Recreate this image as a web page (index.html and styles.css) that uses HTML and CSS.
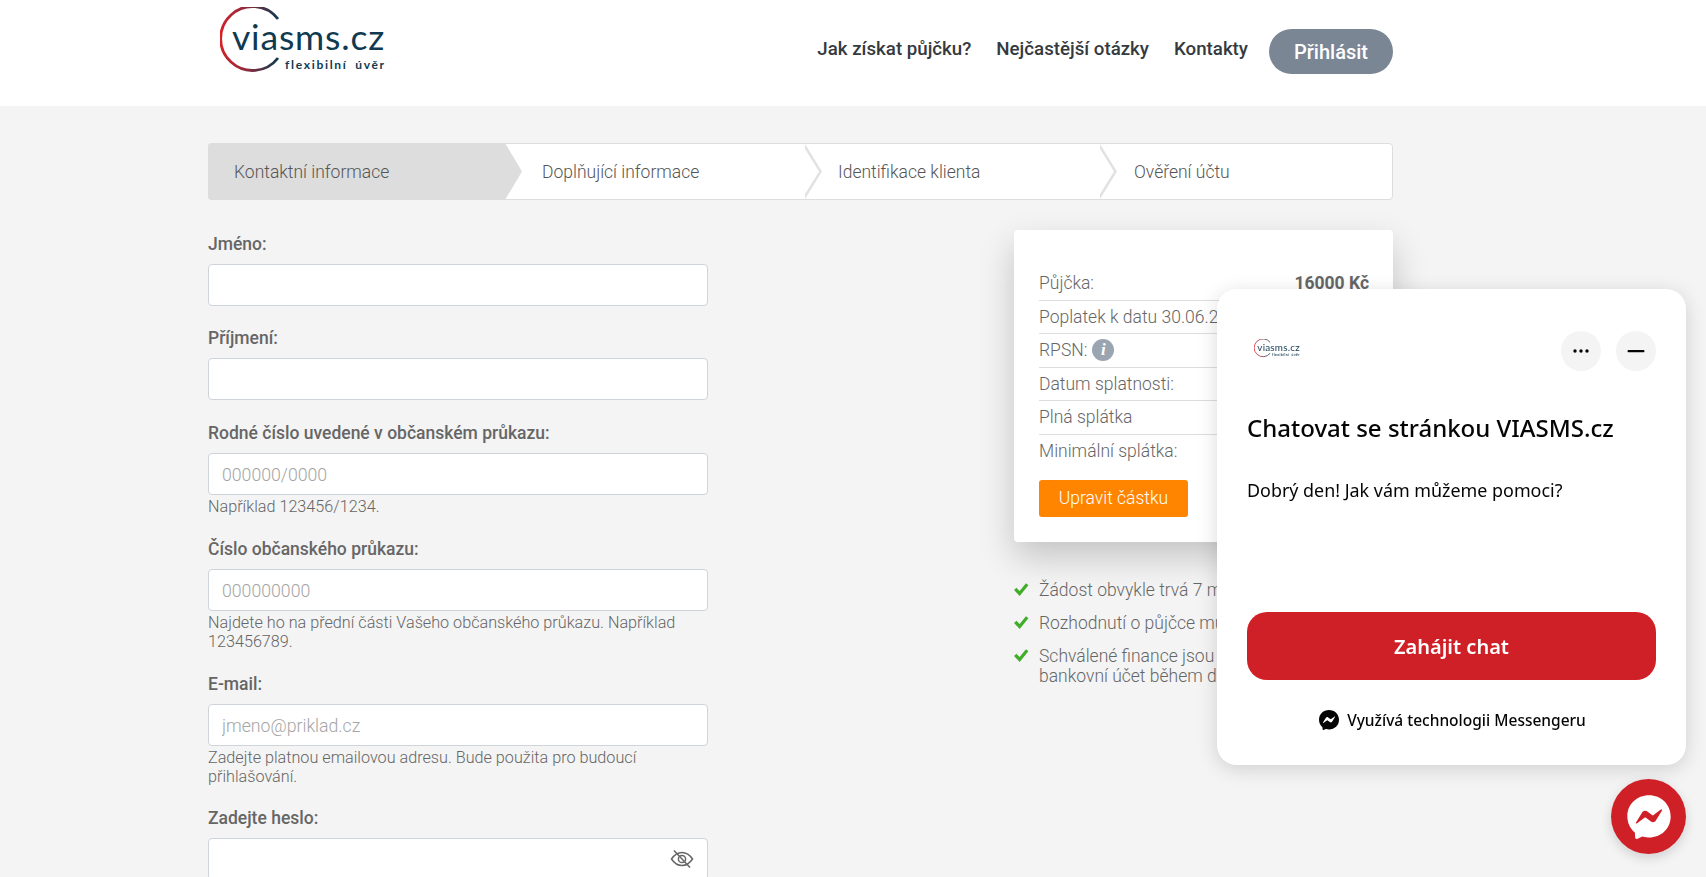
FILE: index.html
```html
<!DOCTYPE html>
<html lang="cs">
<head>
    <meta charset="utf-8" />
    <title>viasms.cz - Kontaktní informace</title>
    <link rel="stylesheet" href="styles.css">
</head>
<body>
    <svg class="defs" width="0" height="0">
        <defs>
            <linearGradient id="ring" x1="0" y1="0" x2="1" y2="0">
                <stop offset="0" stop-color="#d3222a" />
                <stop offset="0.45" stop-color="#8f2a3c" />
                <stop offset="1" stop-color="#0f3a50" />
            </linearGradient>
        </defs>
    </svg>

    <header class="top">
        <div class="top-in">
            <a href="#" class="logo">
                <svg viewBox="0 0 176 68" width="176" height="68">
                    <path d="M58 12A32 32 0 1 0 58 51" fill="none" stroke="url(#ring)" stroke-width="2.800" />
                    <text x="12" y="43" class="logo-main">viasms.cz</text>
                    <text x="65" y="62" class="logo-sub">flexibilní úvěr</text>
                </svg>
            </a>
            <nav class="nav">
                <a href="#">Jak získat půjčku?</a>
                <a href="#">Nejčastější otázky</a>
                <a href="#">Kontakty</a>
                <a href="#" class="login">Přihlásit</a>
            </nav>
        </div>
    </header>

    <main class="wrap">
        <ol class="steps">
            <li class="step active">Kontaktní informace</li>
            <li class="step s2">Doplňující informace</li>
            <li class="step s3">Identifikace klienta</li>
            <li class="step s4">Ověření účtu</li>
        </ol>

        <div class="cols">
            <form class="form">
                <div class="field">
                    <label>Jméno:</label>
                    <input type="text">
                </div>
                <div class="field">
                    <label>Příjmení:</label>
                    <input type="text">
                </div>
                <div class="field">
                    <label>Rodné číslo uvedené v občanském průkazu:</label>
                    <input type="text" placeholder="000000/0000">
                    <p class="hint">Například 123456/1234.</p>
                </div>
                <div class="field">
                    <label>Číslo občanského průkazu:</label>
                    <input type="text" placeholder="000000000">
                    <p class="hint">Najdete ho na přední části Vašeho občanského průkazu. Například 123456789.</p>
                </div>
                <div class="field email">
                    <label>E-mail:</label>
                    <input type="text" placeholder="jmeno@priklad.cz">
                    <p class="hint">Zadejte platnou emailovou adresu. Bude použita pro budoucí přihlašování.</p>
                </div>
                <div class="field">
                    <label>Zadejte heslo:</label>
                    <div class="pass">
                        <input type="password">
                        <svg class="eye" viewBox="0 0 24 24" width="24" height="24" fill="none" stroke="#666" stroke-width="1.500">
                            <path d="M1.500 12C4.500 7.500 8 5.500 12 5.500s7.500 2 10.500 6.500C19.500 16.500 16 18.500 12 18.500S4.500 16.500 1.500 12z" />
                            <circle cx="12" cy="12" r="3.600" />
                            <path d="M4 3.500l16 17" />
                        </svg>
                    </div>
                </div>
            </form>

            <aside class="side">
                <div class="card">
                    <div class="row"><span>Půjčka:</span><b>16000 Kč</b></div>
                    <div class="row"><span>Poplatek k datu 30.06.2</span></div>
                    <div class="row"><span>RPSN:</span><i class="info">i</i></div>
                    <div class="row"><span>Datum splatnosti:</span></div>
                    <div class="row"><span>Plná splátka</span></div>
                    <div class="row last"><span>Minimální splátka:</span></div>
                    <a href="#" class="edit">Upravit částku</a>
                </div>
                <ul class="checks">
                    <li><svg viewBox="0 0 16 16" width="17" height="17"><path d="M1 8.500l2.200-2.200 3 3 6-7.300 2.300 2-8.200 10.200z" fill="#42ad2b" /></svg>Žádost obvykle trvá 7 m</li>
                    <li><svg viewBox="0 0 16 16" width="17" height="17"><path d="M1 8.500l2.200-2.200 3 3 6-7.300 2.300 2-8.200 10.200z" fill="#42ad2b" /></svg>Rozhodnutí o půjčce mu</li>
                    <li><svg viewBox="0 0 16 16" width="17" height="17"><path d="M1 8.500l2.200-2.200 3 3 6-7.300 2.300 2-8.200 10.200z" fill="#42ad2b" /></svg>Schválené finance jsou<br>bankovní účet během d</li>
                </ul>
            </aside>
        </div>
    </main>

    <section class="chat">
        <div class="chat-head">
            <svg class="chat-logo" viewBox="0 0 176 68" width="49" height="19">
                <path d="M58 12A32 32 0 1 0 58 51" fill="none" stroke="url(#ring)" stroke-width="2.800" />
                <text x="12" y="43" class="logo-main">viasms.cz</text>
                <text x="65" y="62" class="logo-sub">flexibilní úvěr</text>
            </svg>
            <div class="chat-btns">
                <span class="round">
                    <svg viewBox="0 0 20 20" width="20" height="20" fill="#050505"><circle cx="4" cy="10" r="1.700" /><circle cx="10" cy="10" r="1.700" /><circle cx="16" cy="10" r="1.700" /></svg>
                </span>
                <span class="round">
                    <svg viewBox="0 0 20 20" width="20" height="20"><rect x="1.500" y="9" width="17" height="2.200" rx="1" fill="#050505" /></svg>
                </span>
            </div>
        </div>
        <h2 class="chat-title">Chatovat se stránkou VIASMS.cz</h2>
        <p class="chat-text">Dobrý den! Jak vám můžeme pomoci?</p>
        <a href="#" class="chat-start">Zahájit chat</a>
        <div class="chat-foot">
            <svg viewBox="0 0 24 24" width="24" height="24">
                <path d="M12 2C6.400 2 2 6.100 2 11.700c0 2.900 1.200 5.500 3.200 7.200.2.100.3.400.3.600l.1 1.800c0 .6.600 1 1.100.7l2-.9c.2-.1.400-.1.600 0 .9.200 1.800.4 2.700.4 5.600 0 10-4.100 10-9.700S17.600 2 12 2z" fill="#050505" />
                <path d="M6 14.500l2.900-4.700c.5-.7 1.500-.9 2.200-.4l2.300 1.700c.2.200.5.200.7 0l3.200-2.400c.4-.3 1-.2.700.3l-2.900 4.700c-.5.700-1.500.9-2.200.4l-2.300-1.700c-.2-.2-.5-.2-.7 0l-3.200 2.400c-.4.300-1 .2-.7-.3z" fill="#fff" />
            </svg>
            Využívá technologii Messengeru
        </div>
    </section>

    <a href="#" class="fab">
        <svg viewBox="0 0 24 24" width="52" height="52">
            <path d="M12 2C6.400 2 2 6.100 2 11.700c0 2.900 1.200 5.500 3.200 7.200.2.100.3.400.3.600l.1 1.800c0 .6.600 1 1.100.7l2-.9c.2-.1.400-.1.600 0 .9.200 1.800.4 2.700.4 5.600 0 10-4.100 10-9.700S17.600 2 12 2z" fill="#fff" />
            <path d="M6 14.500l2.900-4.700c.5-.7 1.500-.9 2.200-.4l2.300 1.700c.2.200.5.200.7 0l3.200-2.400c.4-.3 1-.2.700.3l-2.900 4.700c-.5.700-1.500.9-2.200.4l-2.300-1.700c-.2-.2-.5-.2-.7 0l-3.200 2.400c-.4.300-1 .2-.7-.3z" fill="#d02027" />
        </svg>
    </a>
</body>
</html>
```

FILE: styles.css
```css
html, body {
    height: 100%;
    overflow: hidden;
}

body {
    margin: 0;
    background-color: #f4f4f4;
    color: #666;
    font-family: Roboto, "Liberation Sans", sans-serif;
    font-size: 17.500px;
    font-weight: 300;
}

a {
    text-decoration: none;
}

.defs {
    display: block;
    height: 0;
}

/* header */
.top {
    height: 106px;
    background-color: #fff;
}

.top-in {
    width: 1185px;
    margin-left: 208px;
    height: 100%;
    display: flex;
    justify-content: space-between;
}

.logo {
    margin: 7px 0 0 12px;
}

.logo-main {
    font-family: Lato, "Open Sans", sans-serif;
    font-size: 35.500px;
    font-weight: 400;
    letter-spacing: 0.8px;
    fill: #0f3a50;
}

.logo-sub {
    font-family: Lato, "Open Sans", sans-serif;
    font-size: 12px;
    font-weight: 700;
    letter-spacing: 1.700px;
    word-spacing: 3px;
    fill: #0f3a50;
}

.nav {
    display: flex;
    align-items: center;
    gap: 25px;
    height: 98px;
}

.nav a {
    color: #343a40;
    font-size: 18.700px;
    font-weight: 500;
}

.nav .login {
    margin-left: -4px;
    width: 124px;
    height: 45px;
    line-height: 47px;
    margin-top: 5px;
    text-align: center;
    border-radius: 23px;
    background-color: #7a8694;
    color: #fff;
    font-size: 20px;
}

/* steps */
.wrap {
    width: 1185px;
    margin-left: 208px;
}

.steps {
    list-style: none;
    margin: 37px 0 0;
    padding: 0;
    display: flex;
    height: 57px;
    box-sizing: border-box;
    border: 1px solid #ddd;
    border-radius: 4px;
    background-color: #fff;
}

.step {
    position: relative;
    box-sizing: border-box;
    line-height: 56px;
    color: #555;
}

.step::before,
.step::after {
    content: "";
    position: absolute;
    top: 0;
    bottom: 0;
    width: 17px;
    clip-path: polygon(0 0, 100% 50%, 0 100%);
    z-index: 1;
}

.step::before {
    right: -17px;
    background-color: #e2e2e2;
}

.step::after {
    right: -14px;
    background-color: #fff;
}

.step.active {
    width: 297px;
    padding-left: 26px;
    margin: -1px 0 -1px -1px;
    line-height: 58px;
    background-color: #ddd;
    border-radius: 4px 0 0 4px;
}

.step.active::before {
    background-color: #ddd;
}

.step.active::after {
    display: none;
}

.s2 {
    width: 300px;
    padding-left: 37px;
}

.s3 {
    width: 295px;
    padding-left: 33px;
}

.s4 {
    flex: 1;
    padding-left: 34px;
}

.s4::before,
.s4::after {
    display: none;
}

/* form */
.cols {
    display: flex;
    justify-content: space-between;
    align-items: flex-start;
    margin-top: 30px;
}

.form {
    width: 500px;
    padding-top: 4px;
}

.field {
    margin-bottom: 23px;
}

.field:first-child,
.field.email {
    margin-bottom: 22px;
}

.field label {
    display: block;
    height: 20px;
    line-height: 20px;
    margin-bottom: 10px;
    font-weight: 500;
}

.field input {
    display: block;
    width: 100%;
    height: 42px;
    box-sizing: border-box;
    padding: 2px 13px 0;
    border: 1px solid #ced4da;
    border-radius: 4px;
    background-color: #fff;
    font-family: Roboto, sans-serif;
    font-size: 17.700px;
    font-weight: 300;
    color: #555;
}

.field input::placeholder {
    color: #a5a5a5;
}

.hint {
    margin: 2px 0 0;
    font-size: 16.200px;
    line-height: 19px;
}

.pass {
    position: relative;
}

.eye {
    position: absolute;
    right: 14px;
    top: 9px;
}

/* side */
.side {
    width: 379px;
}

.card {
    box-sizing: border-box;
    height: 312px;
    padding: 37px 24px 0 25px;
    background-color: #fff;
    border-radius: 4px;
    box-shadow: 0 15px 35px rgba(0, 0, 0, 0.2);
}

.row {
    display: flex;
    align-items: center;
    height: 33.500px;
    border-bottom: 1px solid #ddd;
    box-sizing: border-box;
}

.row.last {
    border-bottom: 0;
}

.row b {
    margin-left: auto;
    font-weight: 700;
}

.info {
    width: 22px;
    height: 22px;
    margin-left: 5px;
    border-radius: 50%;
    background-color: #9aa5b1;
    color: #fff;
    font-family: "Liberation Serif", serif;
    font-size: 17px;
    font-weight: 700;
    line-height: 22px;
    text-align: center;
}

.edit {
    display: block;
    width: 149px;
    height: 37px;
    margin-top: 12px;
    line-height: 37px;
    text-align: center;
    border-radius: 3px;
    background-color: #ff8500;
    color: #fff;
    font-weight: 300;
}

.checks {
    list-style: none;
    margin: 38px 0 0;
    padding: 0;
}

.checks li {
    position: relative;
    padding-left: 25px;
    margin-bottom: 13px;
    line-height: 20px;
}

.checks svg {
    position: absolute;
    left: -1px;
    top: 1px;
}

/* chat */
.chat {
    position: fixed;
    top: 289px;
    right: 20px;
    width: 469px;
    height: 476px;
    box-sizing: border-box;
    padding: 42px 30px 0;
    display: flex;
    flex-direction: column;
    background-color: #fff;
    border-radius: 20px;
    box-shadow: 0 4px 20px rgba(0, 0, 0, 0.15);
    font-family: "Noto Sans", sans-serif;
    color: #050505;
}

.chat-head {
    display: flex;
    justify-content: space-between;
    align-items: center;
    padding-left: 7px;
}

.chat-logo {
    margin-top: -5px;
}

.chat-btns {
    display: flex;
    gap: 15px;
}

.round {
    width: 40px;
    height: 40px;
    display: flex;
    align-items: center;
    justify-content: center;
    border-radius: 50%;
    background-color: #f4f4f4;
}

.chat-title {
    margin: 41px 0 0;
    font-size: 24px;
    font-weight: 500;
    line-height: 32px;
}

.chat-text {
    margin: 34px 0 0;
    font-size: 17.900px;
    font-weight: 400;
    line-height: 24px;
}

.chat-start {
    display: block;
    height: 68px;
    margin-top: 110px;
    line-height: 69px;
    text-align: center;
    border-radius: 20px;
    background-color: #d02027;
    color: #fff;
    font-size: 20px;
    font-weight: 600;
}

.chat-foot {
    display: flex;
    align-items: center;
    justify-content: center;
    gap: 6px;
    margin-top: 28px;
    font-size: 15.500px;
    font-weight: 500;
}

.fab {
    position: fixed;
    right: 20px;
    bottom: 23px;
    width: 75px;
    height: 75px;
    display: flex;
    align-items: center;
    justify-content: center;
    border-radius: 50%;
    background-color: #d02027;
    box-shadow: 0 4px 12px rgba(0, 0, 0, 0.15);
}
```
